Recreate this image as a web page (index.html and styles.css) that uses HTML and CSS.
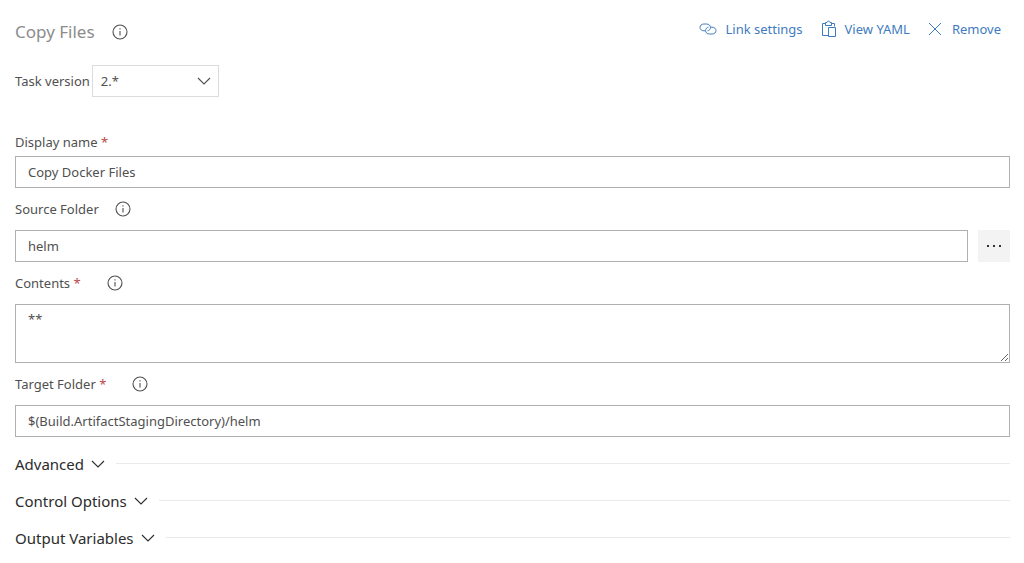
FILE: index.html
```html
<!DOCTYPE html>
<html lang="en">
<head>
<meta charset="utf-8">
<title>Copy Files</title>
<link rel="stylesheet" href="styles.css">
</head>
<body>
<svg class="defs" aria-hidden="true">
  <symbol id="info" viewBox="0 0 16 16"><circle cx="8" cy="8" r="7"/><path d="M8 7v4.500M8 4.300v1.200"/></symbol>
  <symbol id="chevron" viewBox="0 0 14 14"><path d="M1 4l6 6 6-6"/></symbol>
</svg>
<main class="task">
  <header class="header">
    <h1 class="title">Copy Files</h1>
    <button class="info" aria-label="About this task"><svg class="icon"><use href="#info"/></svg></button>
    <nav class="actions">
      <button class="action"><svg class="icon link-icon" viewBox="0 0 18 16"><path d="M6 9.800H5C2.500 9.800 1 8.200 1 6.400S2.500 3 5 3H7.500C10 3 11.500 4.600 11.500 6.400S10 9.800 8.500 9.800M12 6.200H13C15.500 6.200 17 7.800 17 9.600S15.500 13 13 13H10.500C8 13 6.500 11.400 6.500 9.600S8 6.200 9.500 6.200"/></svg>Link settings</button>
      <button class="action"><svg class="icon paste-icon" viewBox="0 0 16 18"><path d="M7 15.500H1.500V3.500H4.500M10.500 3.500H13.500V6.500M4.500 5.500V2.500H6C6 .5 9 .5 9 2.500H10.500V5.500ZM7.500 7.500H14.500V16.500H7.500Z"/></svg>View YAML</button>
      <button class="action"><svg class="icon close-icon" viewBox="0 0 14 14"><path d="M1 1l12 12M13 1L1 13"/></svg>Remove</button>
    </nav>
  </header>

  <div class="version">
    <label for="version">Task version</label>
    <div class="select">
      <select id="version"><option>2.*</option></select>
      <svg class="icon select-arrow"><use href="#chevron"/></svg>
    </div>
  </div>

  <div class="label-row first"><label for="name">Display name <span class="required">*</span></label></div>
  <input class="field" id="name" type="text" value="Copy Docker Files">

  <div class="label-row">
    <label for="source">Source Folder</label>
    <button class="info" aria-label="About source folder"><svg class="icon"><use href="#info"/></svg></button>
  </div>
  <div class="browse-row">
    <input class="field" id="source" type="text" value="helm">
    <button class="browse" aria-label="Browse"><svg class="dots" viewBox="0 0 16 4"><path d="M1 1h2v2H1zM7 1h2v2H7zM13 1h2v2h-2z"/></svg></button>
  </div>

  <div class="label-row wide">
    <label for="contents">Contents <span class="required">*</span></label>
    <button class="info" aria-label="About contents"><svg class="icon"><use href="#info"/></svg></button>
  </div>
  <textarea class="field area" id="contents">**</textarea>

  <div class="label-row wide">
    <label for="target">Target Folder <span class="required">*</span></label>
    <button class="info" aria-label="About target folder"><svg class="icon"><use href="#info"/></svg></button>
  </div>
  <input class="field" id="target" type="text" value="$(Build.ArtifactStagingDirectory)/helm">

  <div class="sections">
    <button class="section">Advanced<svg class="icon chevron"><use href="#chevron"/></svg></button>
    <button class="section">Control Options<svg class="icon chevron"><use href="#chevron"/></svg></button>
    <button class="section">Output Variables<svg class="icon chevron"><use href="#chevron"/></svg></button>
  </div>
</main>
</body>
</html>
```

FILE: styles.css
```css
* { box-sizing: border-box; }
body {
  margin: 0;
  background: #fff;
  color: #505050;
  font: 13px/20px "Segoe UI", "Noto Sans", "Open Sans", sans-serif;
}
button, input, select, textarea { font: inherit; color: inherit; }
button { border: 0; padding: 0; background: none; cursor: pointer; }
.defs { position: absolute; width: 0; height: 0; }
.icon { display: block; flex: none; width: 16px; height: 16px; fill: none; stroke: currentColor; stroke-width: 1.1; }
.task { padding: 16px 14px 0 15px; }

.header { display: flex; align-items: center; height: 32px; gap: 17px; }
.title { margin: 0; font-size: 17px; line-height: 24px; font-weight: 400; color: #8c8c8c; }
.actions { display: flex; gap: 18px; margin-left: auto; padding: 0 9px 6px 0; }
.action { display: flex; align-items: center; gap: 8px; color: #3f7cbf; }
.action .icon { stroke-width: 1; }
.link-icon { width: 18px; }
.paste-icon { height: 18px; }
.close-icon { width: 14px; height: 14px; margin-right: 2px; }

.version { display: flex; align-items: center; gap: 2px; margin-top: 17px; }
.select { display: grid; align-items: center; width: 127px; }
.select > * { grid-area: 1 / 1; }
.select select {
  appearance: none;
  width: 100%;
  height: 32px;
  padding: 0 8px;
  border: 1px solid #dcdcdc;
  border-radius: 0;
  background: #fff;
}
.select-arrow, .chevron { width: 14px; height: 14px; }
.select-arrow { justify-self: end; margin-right: 8px; pointer-events: none; }

.label-row { display: flex; align-items: center; gap: 16px; height: 42px; }
.label-row.wide { gap: 26px; }
.label-row.first { height: 28px; margin-top: 31px; }
.required { color: #b9474a; }

.field {
  display: block;
  width: 100%;
  height: 32px;
  margin: 0;
  padding: 0 12px;
  border: 1px solid #b0b0b0;
  border-radius: 0;
  background: #fff;
}
.area { height: 59px; padding: 4px 12px; resize: vertical; }
.browse-row { display: flex; gap: 10px; }
.browse { display: grid; place-items: center; flex: none; width: 32px; height: 32px; background: #f3f3f3; }
.dots { width: 16px; height: 4px; fill: #333; }

.sections { margin-top: 8px; }
.section {
  display: flex;
  align-items: center;
  gap: 7px;
  width: 100%;
  height: 37px;
  font-size: 15px;
  color: #2c2c2c;
}
.section::after { content: ""; flex: 1; height: 1px; margin-left: 4px; background: #eaeaea; }
```
